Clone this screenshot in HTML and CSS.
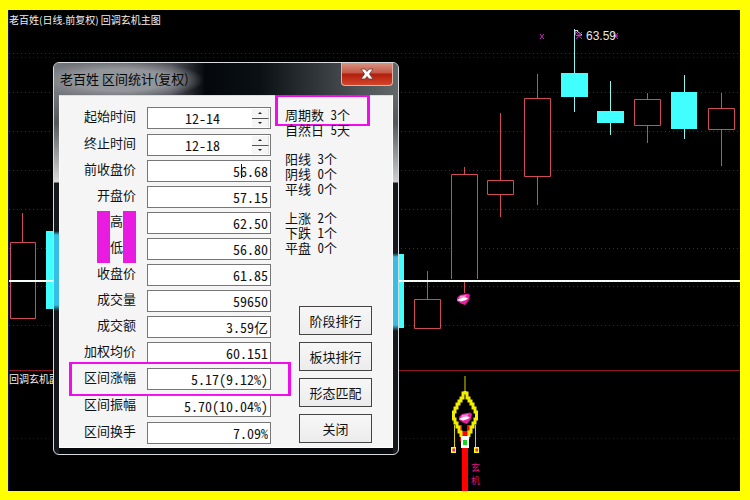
FILE: index.html
```html
<!DOCTYPE html>
<html lang="zh-CN">
<head>
<meta charset="utf-8">
<title>老百姓 区间统计</title>
<link rel="stylesheet" href="styles.css">
</head>
<body>
<main class="desk">
  <svg class="chart" viewBox="0 0 750 500" preserveAspectRatio="none" aria-hidden="true">
    <path class="edge" d="M8.5 10V491"/>
    <g class="grid">
      <path d="M9 53.5H740M9 92.5H740M9 131.5H740M9 170.5H740M9 209.5H740M9 248.5H740M9 286.5H740M9 325.5H740"/>
      <path class="faint" d="M9 57.5H740M9 438.5H740"/>
    </g>
    <path class="divider" d="M9 370.5H740"/>
    <g class="up">
      <path d="M22.5 213V242M10.500 242.500H35.500V318.500H10.500Z"/>
      <path d="M427.500 271V299M414.500 299.500H440.500V328.500H414.500Z"/>
      <path d="M464.500 167V174M451.500 279V174.500H477.500V279M464.500 282V293"/>
      <path d="M500.500 113V180M487.500 180.500H513.500V194.500H487.500ZM500.500 195V217"/>
      <path d="M537.500 74V98M524.500 98.500H550.500V176.500H524.500ZM537.500 177V205"/>
      <path d="M647.500 93V99M634.500 99.500H660.500V125.500H634.500ZM647.500 126V143"/>
      <path d="M721.500 93V108M708.500 108.500H734.500V129.500H708.500ZM721.500 130V166"/>
    </g>
    <g class="down">
      <path d="M46 231H53V309H46ZM399 254H404V328H399ZM561 73H588V97H561ZM597 111H624V123H597ZM671 92H697V129H671Z"/>
      <path class="wick" d="M574.500 29V73M574.500 97V112M610.500 81V111M610.500 123V135M684.500 75V92M684.500 129V139"/>
    </g>
    <path class="level" d="M9 281H740"/>
    <path class="pointer" d="M575 35V30.500H578M577 31L582 35"/>
    <path class="cross" d="M540 34L544 39M544 34L540 39M576 32L582 39M582 32L576 39M576 35.500H582M613 33L618 39M618 33L613 39M613 36H618"/>
    <text class="price" x="586" y="40">63.59</text>
    <g id="gem">
      <path fill="#e51fa0" d="M457 298L460 295L468 293.500L470 295L469 300L465 305L462 304L457 301Z"/>
      <path fill="#fff" d="M457 300L463 297L468 298L466 300L461 301.500Z"/>
      <path fill="#ff8dcc" d="M460 296L467 295L465 297L459 299Z"/>
    </g>
    <path fill="red" d="M460 425H462V431H467V425H470V439H467V445H463V441H460ZM462 448H468V491H462Z"/>
    <path class="lantern" d="M465 391V393H463V398H461V401H459V404H457V408H455V412H453.500V419H455V423H457V427H459V432H461V437M465 393H467V398H469V401H471V404H473V408H475V412H476.500V419H475V423H473V427H471V432H469V437"/>
    <path class="cord" d="M465 376V391M454.500 425V448M475.500 425V448"/>
    <path fill="#ff0" d="M451 447H456V453H451ZM474 447H479V453H474Z"/>
    <path fill="#e020a0" d="M452.500 448.500H455V451.500H452.500ZM475.500 448.500H478V451.500H475.500Z"/>
    <path fill="#fff" d="M461 436H469V448H461Z"/>
    <path fill="#10d820" d="M463 440H467V445H463Z"/>
    <use href="#gem" x="2" y="119"/>
    <text class="signal" x="471" y="471">玄</text>
    <text class="signal" x="471" y="484">机</text>
  </svg>

  <h1 class="pane-title">老百姓(日线.前复权) 回调玄机主图</h1>
  <h2 class="pane-title lower">回调玄机副图</h2>

  <section class="dialog" role="dialog" aria-labelledby="dialog-title">
    <header class="titlebar">
      <h2 id="dialog-title">老百姓 区间统计(复权)</h2>
      <button class="close" type="button" aria-label="关闭窗口">
        <svg viewBox="0 0 14 12" width="14" height="12"><path d="M1 1H5L7 3.500L9 1H13L9.500 6L13 11H9L7 8.500L5 11H1L4.500 6Z" fill="#fff" stroke="#6b3030" stroke-width=".8"/></svg>
      </button>
    </header>
    <form class="client">
      <div class="fields">
        <div class="group wide">
          <div class="row"><label for="f1">起始时间</label><span class="spin"><input id="f1" value="12-14"><span class="steps"><button type="button" aria-label="增加"></button><button type="button" aria-label="减少"></button></span></span></div>
          <div class="row"><label for="f2">终止时间</label><span class="spin"><input id="f2" value="12-18"><span class="steps"><button type="button" aria-label="增加"></button><button type="button" aria-label="减少"></button></span></span></div>
        </div>
        <div class="group">
          <div class="row"><label for="f3">前收盘价</label><span class="box"><input id="f3" value="56.68"><i class="caret"></i></span></div>
          <div class="row"><label for="f4">开盘价</label><input id="f4" value="57.15"></div>
          <div class="row masked"><label for="f5">高</label><input id="f5" value="62.50"></div>
          <div class="row masked"><label for="f6">低</label><input id="f6" value="56.80"></div>
          <div class="row"><label for="f7">收盘价</label><input id="f7" value="61.85"></div>
        </div>
        <div class="group">
          <div class="row"><label for="f8">成交量</label><input id="f8" value="59650"></div>
          <div class="row"><label for="f9">成交额</label><input id="f9" value="3.59亿"></div>
          <div class="row"><label for="f10">加权均价</label><input id="f10" value="60.151"></div>
        </div>
        <div class="group wide">
          <div class="row marked"><label for="f11">区间涨幅</label><input id="f11" value="5.17(9.12%)"></div>
          <div class="row"><label for="f12">区间振幅</label><input id="f12" value="5.70(10.04%)"></div>
          <div class="row"><label for="f13">区间换手</label><input id="f13" value="7.09%"></div>
        </div>
      </div>
      <div class="side">
        <div class="stats"><p class="period">周期数 3个</p><p>自然日 5天</p></div>
        <div class="stats"><p>阳线 3个</p><p>阴线 0个</p><p>平线 0个</p></div>
        <div class="stats"><p>上涨 2个</p><p>下跌 1个</p><p>平盘 0个</p></div>
        <div class="actions">
          <button type="button">阶段排行</button>
          <button type="button">板块排行</button>
          <button type="button">形态匹配</button>
          <button type="button">关闭</button>
        </div>
      </div>
    </form>
  </section>
</main>
</body>
</html>
```
FILE: styles.css
```css
*, *::before, *::after { box-sizing: border-box; }
body {
  margin: 0;
  font-family: "Noto Sans CJK SC", "Liberation Sans", sans-serif;
}
h1, h2, p { margin: 0; font-weight: 400; }
button, input { font: inherit; margin: 0; padding: 0; border-radius: 0; }

.desk {
  position: relative;
  min-height: 100vh;
  background: #000;
  border: solid #ff0;
  border-width: 10px 10px 9px 8px;
  overflow: hidden;
}
.chart {
  position: absolute;
  top: -10px;
  left: -8px;
  width: 100vw;
  height: 100vh;
}
.edge { stroke: #14146e; }
.grid path { stroke: #6e1a1e; stroke-dasharray: 1 3; fill: none; }
.grid .faint { stroke: #2c1010; }
.divider { stroke: #8e1626; }
.up path { fill: #000; stroke: #cf4b55; }
.down path { fill: #41ffff; }
.down .wick { fill: none; stroke: #8ff5f0; }
.level { stroke: #f4fff8; stroke-width: 2; }
.pointer { fill: none; stroke: #ddd; }
.cross { fill: none; stroke: #d02bd0; }
.price { font: 12px "Liberation Sans", sans-serif; fill: #e8e8e8; }
.lantern { fill: none; stroke: #f2ee00; stroke-width: 3; }
.cord { stroke: #d8d000; stroke-width: 1; }
.signal { font: 9px "Noto Sans CJK SC", sans-serif; fill: #e0148a; }

.pane-title {
  position: relative;
  width: max-content;
  padding: 2px 0 0 1px;
  font-size: 10px;
  line-height: 16px;
  color: #f0f0f0;
}
.lower { position: absolute; top: 359px; left: 0; }

.dialog {
  position: absolute;
  top: 52px;
  left: 45px;
  width: 346px;
  padding: 0 5px 6px;
  border: 1px solid #d9dde0;
  border-radius: 6px;
  background:
    linear-gradient(transparent 190px, #35bfe4 194px, #35bfe4 262px, transparent 268px) right / 5px 100% no-repeat,
    linear-gradient(transparent 168px, #35bfe4 172px, #35bfe4 242px, transparent 248px) left / 5px 100% no-repeat,
    linear-gradient(#666a6e 30px, #53575b 60px, #d0d0d0 119px, #15191d 120px, #15191d) right / 5px 100% no-repeat,
    linear-gradient(#777b80 30px, #53575b 60px, #dcdcdc 119px, #15191d 120px, #15191d) left / 5px 100% no-repeat,
    #05080b;
}
.titlebar {
  display: flex;
  justify-content: space-between;
  align-items: flex-start;
  height: 32px;
  margin: 0 -5px;
  padding: 0 5px 0 6px;
  border-radius: 5px 5px 0 0;
  background:
    radial-gradient(ellipse 84px 20px at 66px 17px, #92959a 55%, transparent),
    linear-gradient(90deg, #73777c, #50545a 34%, #04080c 44%, #0a1014 60%, #4c5155 88%, #62676a);
}
.titlebar h2 { font-size: 13px; line-height: 32px; color: #080808; }
.close {
  display: grid;
  place-items: center;
  width: 52px;
  height: 23px;
  border: 1px solid #d9b5ac;
  border-top: 0;
  border-radius: 0 0 4px 4px;
  background: linear-gradient(#d79584, #c65745 45%, #b01e0c 50%, #d5452c);
}

.client {
  display: flex;
  gap: 14px;
  padding: 11px 0 3px;
  border: 1px solid #fff;
  border-top-color: #ddd;
  background: #f5f5f5;
  color: #111;
  font: 13px "Noto Sans Mono CJK SC", "Noto Sans CJK SC", monospace;
}
.fields, .group { display: flex; flex-direction: column; gap: 4px; }
.wide { gap: 5px; }
.row {
  position: relative;
  display: grid;
  grid-template-columns: 76px 124px;
  column-gap: 11px;
  height: 22px;
}
.row label { text-align: right; line-height: 18px; }
.row input {
  width: 100%;
  min-width: 0;
  height: 22px;
  padding-right: 2px;
  border: 1px solid #777;
  background: #fff;
  color: #111;
  text-align: right;
  font-size: 14px;
}
.spin { display: flex; border: 1px solid #777; background: #fff; }
.row .spin input {
  flex: 1;
  height: 20px;
  border: 0;
  padding: 0 0 0 6px;
  text-align: center;
}
.steps { display: flex; flex-direction: column; width: 19px; padding: 1px; }
.steps button {
  display: grid;
  place-items: center;
  flex: 1;
  border: 1px solid #ddd;
  border-width: 0 1px 0 0;
  background: #f5f5f5;
}
.steps button:first-child { border-bottom: 1px solid #555; }
.steps button::before {
  content: "";
  border: 2px solid transparent;
  border-top: 0;
  border-bottom: 2px solid #222;
}
.steps button:last-child::before { transform: rotate(180deg); }
.box { position: relative; }
.caret {
  position: absolute;
  top: 4px;
  right: 29px;
  width: 1px;
  height: 14px;
  background: #111;
}
.masked label { padding-right: 13px; }
.masked label::before, .masked label::after {
  content: "";
  position: absolute;
  top: -1px;
  left: 37px;
  width: 13px;
  height: 26px;
  background: #ea1be0;
}
.masked label::after { left: 63px; }
.marked::after {
  content: "";
  position: absolute;
  inset: -6px -20px -6px 9px;
  border: 3px solid #f00cec;
  border-width: 2px 3px;
}
.side { flex: 1; display: flex; flex-direction: column; gap: 14px; }
.stats { line-height: 15px; }
.stats p { position: relative; white-space: pre; }
.period::after {
  content: "";
  position: absolute;
  top: -12px;
  left: -10px;
  width: 95px;
  height: 31px;
  border: 3px solid #f00cec;
  border-width: 2px 3px;
}
.actions {
  display: flex;
  flex-direction: column;
  gap: 7px;
  margin: auto 20px 1px 14px;
}
.actions button {
  height: 29px;
  border: 1px solid #444;
  background: linear-gradient(#f7f7f7, #ececec);
  color: #111;
}
```
